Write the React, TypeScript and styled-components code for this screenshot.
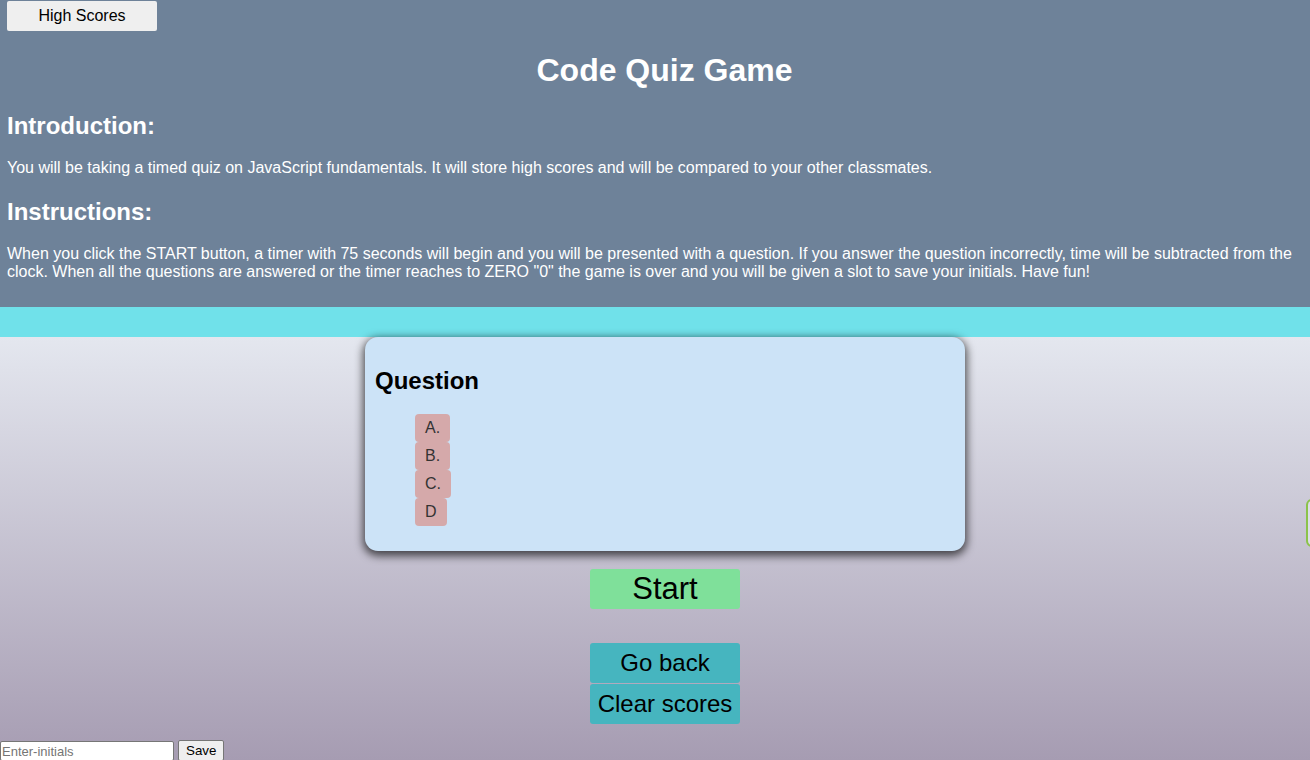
import React from "react";
import styled, { createGlobalStyle } from "styled-components";

const GlobalStyle = createGlobalStyle`
  html, body {
    margin: 0;
    padding: 0;
  }
  body {
    font-family: "Liberation Sans", Arial, sans-serif;
    overflow: hidden;
    min-height: 760px;
    background: linear-gradient(180deg, #e4e7ef 337px, #a69cb2 760px);
  }
`;

const Page = styled.div`
  position: relative;
  width: 1310px;
  min-height: 760px;
  overflow: hidden;
  display: flex;
  flex-direction: column;
  & > * {
    flex-shrink: 0;
  }
`;

const Header = styled.header`
  background: #6e8299;
  color: #ffffff;
  padding: 1px 7px 26px 7px;
  display: flex;
  flex-direction: column;
`;

const TopButton = styled.button`
  width: 150px;
  height: 30px;
  background: #efefef;
  border: none;
  border-radius: 2px;
  font-family: "Liberation Sans", Arial, sans-serif;
  font-size: 16px;
  color: #000;
  padding: 0;
  cursor: pointer;
`;

const Title = styled.h1`
  font-size: 32px;
  font-weight: bold;
  margin: 21px 0 0 0;
  line-height: 37px;
  text-align: center;
  padding-left: 19px;
`;

const SectionTitle = styled.h2<{ $top: number }>`
  font-size: 24px;
  font-weight: bold;
  line-height: 28px;
  margin: ${(p) => p.$top}px 0 0 0;
`;

const Paragraph = styled.p`
  font-size: 16px;
  line-height: 18px;
  margin: 19px 0 0 0;
`;

const Stripe = styled.div`
  height: 30px;
  background: #70e1ea;
`;

const Main = styled.main`
  display: flex;
  flex-direction: column;
  align-items: center;
  padding-left: 20px;
`;

const Card = styled.section`
  width: 600px;
  box-sizing: border-box;
  padding: 10px;
  background: #cce3f7;
  border-radius: 13px;
  box-shadow: 0 3px 9px 2px rgba(0, 0, 0, 0.65);
`;

const Question = styled.h2`
  font-size: 24px;
  font-weight: bold;
  line-height: 28px;
  margin: 20px 0 19px 0;
  color: #000;
`;

const Answers = styled.ul`
  list-style: none;
  margin: 0 0 15px 0;
  padding: 0 0 0 40px;
  display: flex;
  flex-direction: column;
  align-items: flex-start;
`;

const AnswerButton = styled.button`
  background: #d5a9aa;
  border: none;
  border-radius: 4px;
  padding: 5px 10px;
  font-family: "Liberation Sans", Arial, sans-serif;
  font-size: 16px;
  line-height: 18px;
  color: #333;
  cursor: pointer;
`;

const ActionButton = styled.button<{ $bg: string; $size: number; $top: number }>`
  width: 150px;
  height: 40px;
  margin-top: ${(p) => p.$top}px;
  background: ${(p) => p.$bg};
  border: none;
  border-radius: 3px;
  font-family: "Liberation Sans", Arial, sans-serif;
  font-size: ${(p) => p.$size}px;
  color: #000;
  padding: 0;
  cursor: pointer;
`;

const Footer = styled.div`
  display: flex;
  align-items: flex-end;
  gap: 4px;
  margin-top: 16px;
`;

const InitialsInput = styled.input`
  width: 174px;
  height: 20px;
  box-sizing: border-box;
  border: 1px solid #767676;
  border-radius: 2px;
  padding: 0 1px;
  font-family: "Liberation Sans", Arial, sans-serif;
  font-size: 13px;
  &::placeholder {
    color: #757575;
  }
`;

const SaveButton = styled.button`
  height: 21px;
  padding: 0 7px;
  background: #efefef;
  border: 1px solid #767676;
  border-radius: 2px;
  font-family: "Liberation Sans", Arial, sans-serif;
  font-size: 13.33px;
  color: #000;
`;

const SideTab = styled.div`
  position: absolute;
  left: 1306px;
  top: 499px;
  width: 30px;
  height: 44px;
  border: 2px solid #8bc34a;
  border-radius: 6px;
  background: #dcdde7;
`;

export default function App() {
  return (
    <>
      <GlobalStyle />
      <Page>
        <Header>
          <div>
            <TopButton>High Scores</TopButton>
          </div>
          <Title>Code Quiz Game</Title>
          <SectionTitle $top={23}>Introduction:</SectionTitle>
          <Paragraph>
            You will be taking a timed quiz on JavaScript fundamentals. It will store high scores and will be compared to your other classmates.
          </Paragraph>
          <SectionTitle $top={21}>Instructions:</SectionTitle>
          <Paragraph>
            When you click the START button, a timer with 75 seconds will begin and you will be presented with a question. If you answer the question incorrectly, time will be subtracted from the clock. When all the questions are answered or the timer reaches to ZERO "0" the game is over and you will be given a slot to save your initials. Have fun!
          </Paragraph>
        </Header>
        <Stripe />
        <Main>
          <Card>
            <Question>Question</Question>
            <Answers>
              <li><AnswerButton>A.</AnswerButton></li>
              <li><AnswerButton>B.</AnswerButton></li>
              <li><AnswerButton>C.</AnswerButton></li>
              <li><AnswerButton>D</AnswerButton></li>
            </Answers>
          </Card>
          <ActionButton $bg="#7fe09a" $size={31} $top={18}>Start</ActionButton>
          <ActionButton $bg="#46b5bf" $size={24} $top={34}>Go back</ActionButton>
          <ActionButton $bg="#46b5bf" $size={24} $top={1}>Clear scores</ActionButton>
        </Main>
        <Footer>
          <InitialsInput placeholder="Enter-initials" />
          <SaveButton>Save</SaveButton>
        </Footer>
        <SideTab />
      </Page>
    </>
  );
}
